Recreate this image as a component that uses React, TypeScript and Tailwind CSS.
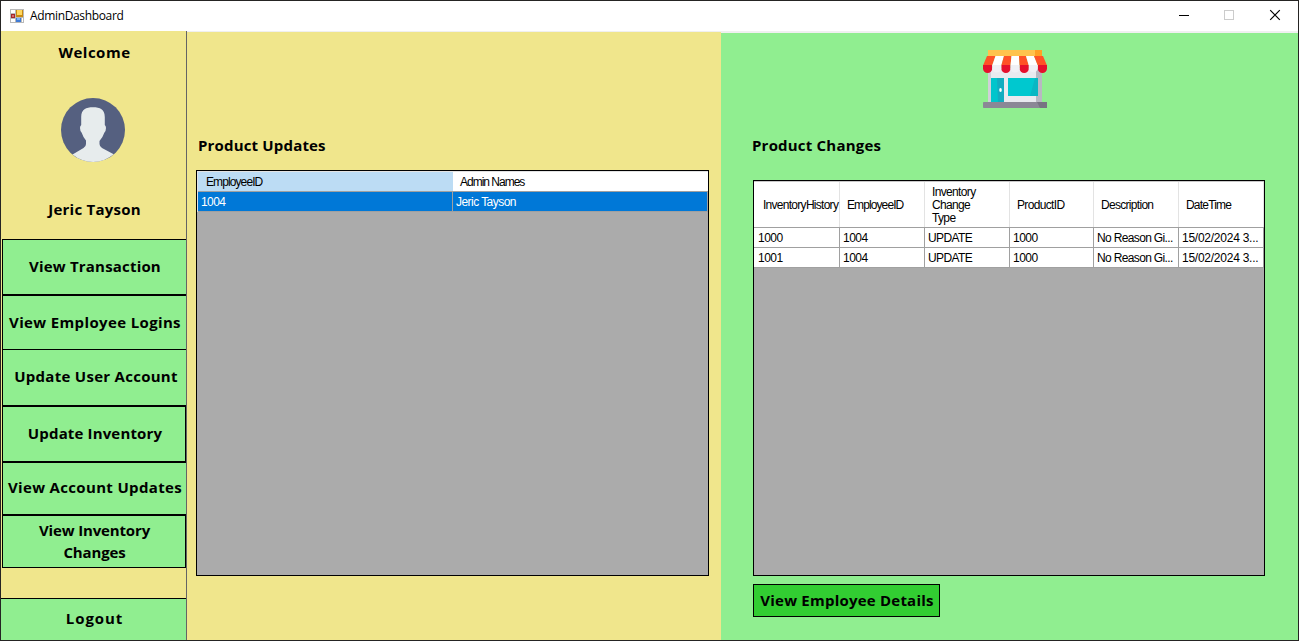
import React from "react";

const bold = "font-['Open_Sans',sans-serif] text-[15px] font-bold whitespace-nowrap";
const small = "font-['Liberation_Sans',Arial,sans-serif] text-[12px] leading-[13px] whitespace-nowrap";

const menu = [
  { lines: ["View Transaction"], box: "h-14 border-b pb-0.5", text: "tracking-[0.19px] ml-px" },
  { lines: ["View Employee Logins"], box: "h-[55px] border-b pb-0.5", text: "tracking-[0.36px] ml-px" },
  { lines: ["Update User Account"], box: "h-14 border-b border-t-0 pb-0.5", text: "tracking-[0.28px] ml-[3px] -mt-0.5" },
  { lines: ["Update Inventory"], box: "h-14 border-b border-r pb-0.5", text: "tracking-[0.15px] ml-0.5" },
  { lines: ["View Account Updates"], box: "h-[53px] border-b pb-1", text: "tracking-[0.33px] ml-px" },
  { lines: ["View Inventory", "Changes"], box: "h-[53px] border-b border-r pb-0.5", text: "tracking-[-0.15px] ml-px" },
];

const columns = [
  { title: ["InventoryHistory"], text: "tracking-[-0.72px]" },
  { title: ["EmployeeID"], text: "tracking-[-0.9px]" },
  { title: ["Inventory", "Change", "Type"], text: "tracking-[-0.65px]" },
  { title: ["ProductID"], text: "tracking-[-0.65px]" },
  { title: ["Description"], text: "tracking-[-0.7px]" },
  { title: ["DateTime"], text: "tracking-[-0.8px]" },
];

const cellText = [
  "tracking-[-0.5px]",
  "tracking-[-0.5px]",
  "tracking-[-0.6px]",
  "tracking-[-0.5px]",
  "tracking-[-0.65px]",
  "tracking-[-0.25px]",
];

const rows = [
  ["1000", "1004", "UPDATE", "1000", "No Reason Gi...", "15/02/2024 3..."],
  ["1001", "1004", "UPDATE", "1000", "No Reason Gi...", "15/02/2024 3..."],
];

function AppIcon() {
  return (
    <svg width="14" height="14" viewBox="0 0 14 14" shapeRendering="crispEdges">
      <rect width="14" height="14" fill="#b9b9b9" />
      <rect x="1" y="1" width="4" height="3" fill="#fff" />
      <rect x="1" y="10" width="4" height="3" fill="#fff" />
      <rect x="12" y="9" width="1" height="4" fill="#fff" />
      <rect x="1" y="5" width="4" height="4" fill="#a3262a" />
      <rect x="2" y="6" width="2" height="2" fill="#d9696b" />
      <rect x="6" y="1" width="7" height="7" fill="#c98a10" />
      <rect x="7" y="1" width="5" height="5" fill="#ffd75e" />
      <rect x="6" y="9" width="5" height="4" fill="#3f7bd6" />
      <rect x="7" y="9" width="3" height="2" fill="#80b3f5" />
    </svg>
  );
}

function Avatar() {
  return (
    <svg width="64" height="64" viewBox="0 0 64 64">
      <circle cx="32" cy="32" r="32" fill="#556080" />
      <path
        d="M11.500 56.500 L22.500 50 Q25 48.500 25 46 V42.500 Q22 39 20.700 34.800 Q19 33 19 30 Q19 28 20.200 27 V19 C20.200 11 25 9.200 32 9.200 C39 9.200 43.800 11 43.800 19 V27 Q45 28 45 30 Q45 33 43.300 34.800 Q42 39 38.500 43 V46 Q38.500 48.500 41 50 L52.700 56.300 A32 32 0 0 1 11.500 56.500 Z"
        fill="#e7eced"
      />
    </svg>
  );
}

function StoreIcon() {
  return (
    <svg width="64" height="58" viewBox="0 0 64 58">
      <path d="M5 18H54V52H5Z" fill="#e9eaef" />
      <path d="M5 18H8V52H5Z" fill="#d0d0d8" />
      <path d="M53 18H59V52H53Z" fill="#b8b8c2" />
      <path d="M5 0H53V6.500H5Z" fill="#ffc34d" />
      <path d="M52 0H59V6.500H52Z" fill="#ffa024" />
      <path d="M4 6H12.500L9.200 15.500H0Z" fill="#ff5126" />
      <path d="M12.500 6H21L18.300 15.500H9.200Z" fill="#fff" />
      <path d="M21 6H28.500L27.500 15.500H18.300Z" fill="#ff5126" />
      <path d="M28.500 6H36L36.600 15.500H27.500Z" fill="#fff" />
      <path d="M36 6H43L45.800 15.500H36.600Z" fill="#ff5126" />
      <path d="M43 6H51L54.800 15.500H45.800Z" fill="#fff" />
      <path d="M51 6H60L64 15.500H54.800Z" fill="#ff5126" />
      <path d="M0 15H9.200V18.500A4.600 4.600 0 0 1 0 18.500Z M18.300 15H27.500V18.500A4.600 4.600 0 0 1 18.300 18.500Z M36.600 15H45.800V18.500A4.600 4.600 0 0 1 36.600 18.500Z M54.800 15H64V18.500A4.600 4.600 0 0 1 54.800 18.500Z" fill="#e60f2d" />
      <path d="M9.200 15H18.300V18.500A4.600 4.600 0 0 1 9.200 18.500Z M27.500 15H36.600V18.500A4.600 4.600 0 0 1 27.500 18.500Z M45.800 15H54.800V18.500A4.600 4.600 0 0 1 45.800 18.500Z" fill="#f0f0f5" />
      <rect x="8" y="28" width="13" height="24" fill="#00c5cc" />
      <path d="M14 28H21V52H15Z" fill="#11adc0" />
      <ellipse cx="17.500" cy="40" rx="1.300" ry="2" fill="#fff" />
      <rect x="25" y="28" width="30" height="18" fill="#00c8cf" />
      <path d="M52 28H55V46H47Z" fill="#08b7c3" />
      <rect y="52" width="64" height="6" rx="0.800" fill="#8b8896" />
      <path d="M54 52H64V58H57Z" fill="#777482" />
    </svg>
  );
}

export default function App() {
  return (
    <div className="flex h-[641px] w-[1299px] flex-col overflow-hidden border border-[#252423] bg-[#f0f0f0] text-black">
      <header className="flex h-[30px] shrink-0 items-center bg-white pb-px pl-[9px]">
        <AppIcon />
        <span className="ml-1.5 flex-1 pt-px font-['Open_Sans',sans-serif] text-[12px] leading-4 tracking-[-0.35px]">AdminDashboard</span>
        <svg width="130" height="29" viewBox="0 0 130 29" fill="none" className="shrink-0">
          <path d="M11 14.500H21" stroke="#000" />
          <rect x="56.500" y="9.500" width="9" height="9" stroke="#ccc" />
          <path d="M102.200 9.200L111.800 18.800M111.800 9.200L102.200 18.800" stroke="#000" strokeWidth="1.200" />
        </svg>
      </header>

      <div className="flex min-h-0 flex-1">
        <aside className="flex w-[186px] shrink-0 flex-col border-r border-[#646464] bg-[#f0e68c]">
          <div className="flex h-[208px] shrink-0 flex-col items-center">
            <h1 className={`${bold} mt-[11px] ml-0.5 h-5 leading-5 tracking-[0.5px]`}>Welcome</h1>
            <div className="mt-9 mr-px h-16"><Avatar /></div>
            <h2 className={`${bold} mt-[37px] ml-0.5 h-5 leading-5 tracking-[0.23px]`}>Jeric Tayson</h2>
          </div>
          <nav className="ml-px flex flex-col">
            {menu.map((m) => (
              <button
                key={m.lines[0]}
                className={`${bold} flex shrink-0 flex-col items-center justify-center border-t border-l border-black bg-[#90ee90] leading-[22px] ${m.box}`}
              >
                {m.lines.map((l) => <span key={l} className={m.text}>{l}</span>)}
              </button>
            ))}
          </nav>
          <button className={`${bold} mt-[30px] flex flex-1 items-center justify-center border-t border-black bg-[#90ee90] pb-0.5 pl-0.5 tracking-[0.9px]`}>
            Logout
          </button>
        </aside>

        <section className="mt-px flex w-[534px] shrink-0 flex-col bg-[#f0e68c] pl-[9px]">
          <h2 className={`${bold} mt-[103px] ml-0.5 h-5 leading-5 tracking-[0.17px]`}>Product Updates</h2>
          <div className="mt-[15px] h-[406px] w-[513px] border border-black bg-[#ababab]">
            <div className="border-t border-l border-[#e3e3e3]">
              <div className={`${small} flex h-5 items-center border-b border-[#a0a0a0] bg-white`}>
                <div className="flex h-full w-[255px] items-center bg-[#bcdcf4] pt-px pl-2 tracking-[-0.9px]">EmployeeID</div>
                <div className="pt-px pl-[7px] tracking-[-1px]">Admin Names</div>
              </div>
              <div className={`${small} flex h-5 border-b border-[#a0a0a0] bg-[#0078d7] tracking-[-0.55px] text-white`}>
                <div className="flex h-full w-[255px] items-center border-r border-[#a0a0a0] pt-px pl-[3px]">1004</div>
                <div className="flex flex-1 items-center border-r border-[#a0a0a0] pt-px pl-[3px]">Jeric Tayson</div>
              </div>
            </div>
          </div>
        </section>

        <section className="mt-0.5 flex flex-1 flex-col bg-[#90ee90] pl-8">
          <div className="mt-[17px] ml-[230px] h-[58px]"><StoreIcon /></div>
          <h2 className={`${bold} mt-[27px] -ml-px h-5 leading-5 tracking-[0.2px]`}>Product Changes</h2>
          <div className="mt-[25px] h-[396px] w-[512px] shrink-0 border border-black bg-[#ababab]">
            <div className={`${small} grid h-[47px] grid-cols-[86px_85px_85px_84px_85px_85px] border-b border-t border-b-[#a0a0a0] border-t-[#c8c8c8] bg-white`}>
              {columns.map((c, i) => (
                <div key={c.title[0]} className={`flex flex-col justify-center border-r border-[#e3e3e3] pt-0.5 ${i === 0 ? "pl-[9px]" : "pl-[7px]"} ${c.text}`}>
                  {c.title.map((t) => <span key={t}>{t}</span>)}
                </div>
              ))}
            </div>
            {rows.map((r) => (
              <div key={r[0]} className={`${small} grid h-5 grid-cols-[86px_85px_85px_84px_85px_85px] border-b border-[#a0a0a0] bg-white`}>
                {r.map((v, i) => (
                  <div key={i} className={`flex items-center border-r border-[#a0a0a0] pt-px ${i === 0 ? "pl-1" : "pl-[3px]"} ${cellText[i]}`}>{v}</div>
                ))}
              </div>
            ))}
          </div>
          <button className={`${bold} mt-2 flex h-[33px] w-[187px] shrink-0 items-center justify-center border border-black bg-[#32cd32] pl-px tracking-[0.22px]`}>
            View Employee Details
          </button>
        </section>
      </div>
    </div>
  );
}
